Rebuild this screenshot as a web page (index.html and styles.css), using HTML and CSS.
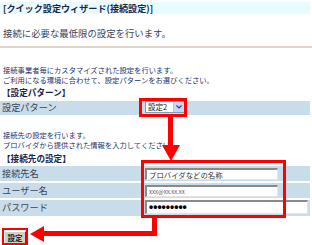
FILE: index.html
```html
<!DOCTYPE html>
<html>
  <head>
    <title>クイック設定ウィザード</title>
    <link rel="stylesheet" href="styles.css">
  </head>
  <body>
    <div class="page">
      <div class="title">[クイック設定ウィザード(接続設定)]</div>
      <div class="lead">接続に必要な最低限の設定を行います。</div>
      <div class="rule"></div>

      <div class="note">
        接続事業者毎にカスタマイズされた設定を行います。<br>
        ご利用になる環境に合わせて、設定パターンをお選びください。
      </div>
      <div class="head">【設定パターン】</div>
      <div class="row row-pattern">
        <div class="label">設定パターン</div>
        <div class="cell">
          <div class="select">
            <span class="select-text">設定2</span>
            <span class="select-btn">
              <svg width="6" height="4" viewBox="0 0 6 4"><path d="M0.5 0.5 L3 3 L5.5 0.5" fill="none" stroke="#2c3f8a" stroke-width="1.2"/></svg>
            </span>
          </div>
        </div>
      </div>

      <div class="note note-second">
        接続先の設定を行います。<br>
        プロバイダから提供された情報を入力してください。
      </div>
      <div class="head head-second">【接続先の設定】</div>
      <div class="row">
        <div class="label">接続先名</div>
        <div class="cell"><div class="input">プロバイダなどの名称</div></div>
      </div>
      <div class="row">
        <div class="label">ユーザー名</div>
        <div class="cell"><div class="input input-small">xxx@xx.xx.xx</div></div>
      </div>
      <div class="row row-pass">
        <div class="label">パスワード</div>
        <div class="cell"><div class="input input-pass">•••••••••</div></div>
      </div>

      <div class="actions">
        <button class="submit">設定</button>
      </div>

      <!-- red guide marks drawn over the form -->
      <svg class="marks" width="312" height="245" viewBox="0 0 312 245">
        <rect x="140.5" y="99.5" width="45" height="16" fill="none" stroke="#f00" stroke-width="3"/>
        <rect x="168" y="116" width="5" height="30" fill="#f00"/>
        <polygon points="162,145 180,145 171,161" fill="#f00"/>
        <rect x="142.5" y="161.5" width="142" height="55" fill="none" stroke="#f00" stroke-width="3"/>
        <rect x="152" y="217" width="5" height="19" fill="#f00"/>
        <rect x="43" y="231" width="114" height="5" fill="#f00"/>
        <polygon points="44,226 44,242 30,234" fill="#f00"/>
        <rect x="3" y="229" width="24" height="15" fill="none" stroke="#f00" stroke-width="2"/>
      </svg>
    </div>
  </body>
</html>
```

FILE: styles.css
```css
body {
  margin: 0;
  background: #fff;
  font-family: "Noto Sans CJK JP", "Noto Sans", sans-serif;
  color: #2b3550;
}
.page {
  position: relative;
  width: 312px;
  height: 245px;
  overflow: hidden;
}
.title {
  margin-top: 2px;
  width: 310px;
  height: 12px;
  line-height: 12px;
  padding-left: 3px;
  box-sizing: border-box;
  background: #e8fcff;
  font-size: 9.1px;
  font-weight: bold;
  color: #1a2550;
}
.lead {
  margin-top: 13px;
  padding-left: 3px;
  height: 12px;
  line-height: 12px;
  font-size: 9.4px;
  color: #3a4458;
}
.rule {
  margin-top: 7px;
  height: 2px;
  background: #dcd5c8;
}
.note {
  margin-top: 17px;
  padding-left: 3px;
  font-size: 7.3px;
  line-height: 10px;
  color: #26346a;
  white-space: nowrap;
}
.note-second {
  margin-top: 15px;
}
.head {
  margin-top: 1px;
  padding-left: 2px;
  height: 12px;
  line-height: 12px;
  font-size: 8.6px;
  font-weight: bold;
  color: #1a2550;
}
.head-second {
  margin-top: 2px;
}
.row {
  display: flex;
  margin-top: 2px;
  width: 310px;
  height: 15px;
  background: #c9dcea;
}
.row-pattern {
  margin-top: 3px;
  height: 14px;
}
.row-pass {
  height: 16px;
}
.label {
  width: 143px;
  padding-left: 2px;
  font-size: 9.2px;
  line-height: 15px;
  color: #3a4458;
}
.row-pattern .label {
  line-height: 13px;
}
.cell {
  flex: 1;
}
.select {
  display: flex;
  align-items: center;
  width: 40px;
  height: 12px;
  box-sizing: border-box;
  border: 1px solid #7f9db9;
  background: #fff;
}
.select-text {
  flex: 1;
  padding-left: 2px;
  font-size: 7.5px;
  line-height: 10px;
  color: #222;
}
.select-btn {
  display: flex;
  align-items: center;
  justify-content: center;
  width: 10px;
  height: 10px;
  background: #c6d6f6;
  border-left: 1px solid #b8c8ec;
}
.input {
  margin-top: 2px;
  width: 133px;
  height: 12px;
  box-sizing: border-box;
  border-top: 2px solid #8a8a8a;
  border-left: 2px solid #8a8a8a;
  border-bottom: 1px solid #e4e4e4;
  border-right: 1px solid #e4e4e4;
  background: #fff;
  padding-left: 2px;
  font-size: 7.4px;
  line-height: 9px;
  color: #333;
  white-space: nowrap;
}
.input-small {
  font-size: 6px;
  color: #555;
}
.input-pass {
  margin-top: 0;
  width: 163px;
  height: 14px;
  font-family: "Liberation Sans", sans-serif;
  font-size: 12px;
  font-weight: bold;
  line-height: 10px;
  color: #000;
}
.actions {
  margin-top: 15px;
  padding-left: 4px;
}
.submit {
  display: block;
  width: 22px;
  height: 13px;
  padding: 0;
  background: #d4d0c8;
  border: 1px solid;
  border-color: #fff #404040 #404040 #fff;
  font-family: "Noto Sans CJK JP", sans-serif;
  font-size: 7.5px;
  font-weight: bold;
  line-height: 10px;
  color: #222;
}
.marks {
  position: absolute;
  left: 0;
  top: 0;
  pointer-events: none;
}
```
